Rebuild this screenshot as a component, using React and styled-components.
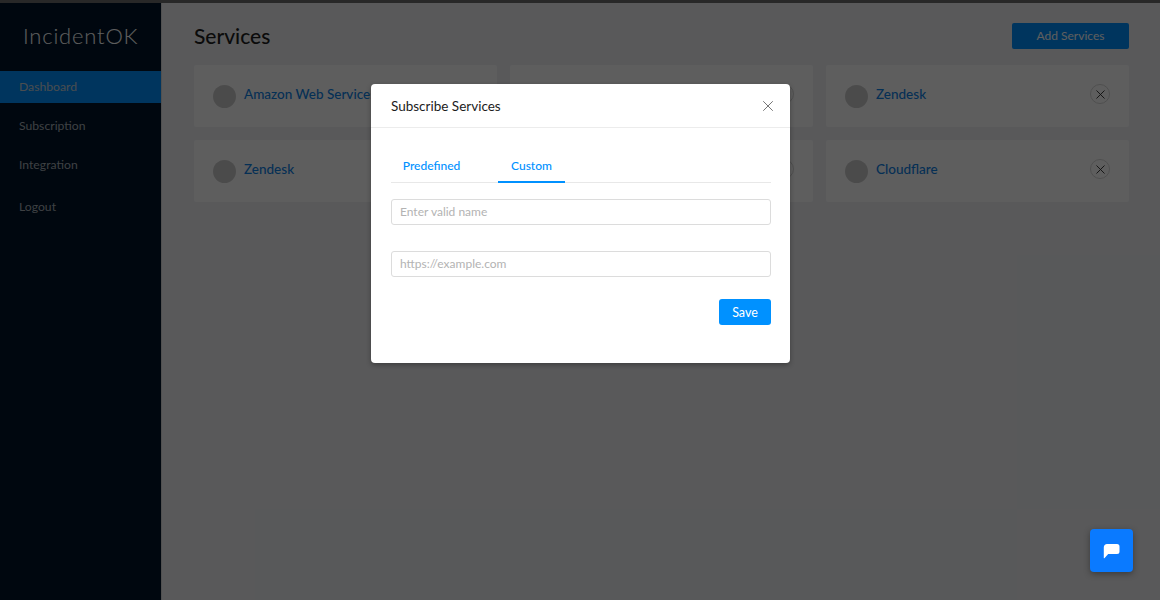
import React from "react";
import styled, { createGlobalStyle } from "styled-components";
import { X } from "lucide-react";

const GlobalStyle = createGlobalStyle`
  html, body { margin: 0; padding: 0; height: 100%; overflow: hidden; }
  body { font-family: "Lato", "Noto Sans", sans-serif; background: #f0f2f5; }
  * { box-sizing: border-box; }
`;

const Page = styled.div`
  position: relative;
  display: flex;
  width: 1160px;
  height: 600px;
  padding-top: 3px;
  background: #f0f2f5;
  overflow: hidden;
`;

const TopEdge = styled.div`
  position: absolute;
  top: 0;
  left: 0;
  right: 0;
  height: 3px;
  background: #6e6e6e;
`;

const Sidebar = styled.aside`
  width: 162px;
  flex: none;
  background: #001529;
  border-right: 1px solid #d9d9d9;
`;

const Logo = styled.div`
  height: 68px;
  padding: 20px 0 0 23px;
  color: #ffffff;
  font-family: "Lato", sans-serif;
  font-size: 22px;
  font-weight: 300;
  line-height: 26px;
  letter-spacing: 0.8px;
`;

const NavItem = styled.a`
  display: flex;
  align-items: center;
  height: 32px;
  margin-top: ${(p) => p.$gap}px;
  padding: 0 0 2px 19px;
  font-size: 12.2px;
  color: ${(p) => (p.$active ? "#c8d0d8" : "#a8afb7")};
  background: ${(p) => (p.$active ? "#0091ff" : "transparent")};
`;

const Main = styled.main`
  flex: 1;
  padding: 20px 31px 0 32px;
`;

const Header = styled.div`
  display: flex;
  align-items: center;
  justify-content: space-between;
  height: 26px;
`;

const Title = styled.h1`
  margin: 0;
  color: #1f1f1f;
  font-size: 21px;
  font-weight: 500;
  line-height: 26px;
`;

const AddButton = styled.button`
  width: 117px;
  height: 26px;
  padding: 0 0 2px;
  border: 0;
  border-radius: 2px;
  background: #0091ff;
  color: #ffffff;
  font: inherit;
  font-size: 12px;
`;

const CardGrid = styled.div`
  display: grid;
  grid-template-columns: repeat(3, 303px);
  grid-auto-rows: 62px;
  gap: 13px;
  margin-top: 16px;
`;

const Card = styled.div`
  display: flex;
  align-items: center;
  padding: 0 19px;
  background: #ffffff;
  border-radius: 2px;
`;

const Avatar = styled.span`
  width: 23px;
  height: 23px;
  flex: none;
  border-radius: 50%;
  background: #cccccc;
`;

const CardName = styled.a`
  flex: 1;
  margin: 0 0 5px 8px;
  color: #0f82e6;
  font-size: 13.5px;
  font-weight: 500;
  white-space: nowrap;
`;

const RemoveButton = styled.span`
  display: flex;
  align-items: center;
  justify-content: center;
  width: 20px;
  height: 20px;
  flex: none;
  margin-bottom: 4px;
  border: 1px solid #d6d6d6;
  border-radius: 50%;
  color: #222222;
`;

const ChatButton = styled.button`
  position: absolute;
  right: 27px;
  bottom: 28px;
  display: flex;
  align-items: center;
  justify-content: center;
  width: 43px;
  height: 43px;
  border: 0;
  border-radius: 4px;
  background: #0a7aff;
  box-shadow: 0 2px 6px rgba(0, 0, 0, 0.35);
  z-index: 2;
`;

const Mask = styled.div`
  position: absolute;
  inset: 0;
  background: rgba(0, 0, 0, 0.63);
  z-index: 1;
`;

const Modal = styled.section`
  position: absolute;
  top: 84px;
  left: 371px;
  width: 419px;
  height: 279px;
  border-radius: 4px;
  background: #ffffff;
  box-shadow: 0 2px 5px rgba(0, 0, 0, 0.3);
  z-index: 3;
`;

const ModalHeader = styled.header`
  display: flex;
  align-items: center;
  justify-content: space-between;
  height: 44px;
  padding: 0 13px 0 20px;
  border-bottom: 1px solid #ececec;
  color: #1c1c1c;
  font-size: 13.5px;
`;

const CloseButton = styled.span`
  display: flex;
  color: #666666;
`;

const ModalBody = styled.div`
  display: flex;
  flex-direction: column;
  padding: 24px 19px 0 20px;
`;

const Tabs = styled.div`
  display: flex;
  gap: 26px;
  height: 31px;
  border-bottom: 1px solid #e8e8e8;
`;

const Tab = styled.button`
  width: ${(p) => p.$width}px;
  height: 31px;
  padding: 0 0 2px;
  border: 0;
  border-bottom: 2px solid ${(p) => (p.$active ? "#0091ff" : "transparent")};
  background: none;
  color: #0091ff;
  font: inherit;
  font-size: 12px;
  font-weight: 500;
`;

const Input = styled.input`
  display: block;
  width: 100%;
  height: 26px;
  margin-top: ${(p) => p.$gap}px;
  padding: 0 8px 2px;
  border: 1px solid #dcdcdc;
  border-radius: 3px;
  font: inherit;
  font-size: 12px;
  &::placeholder { color: #b3b3b3; opacity: 1; }
`;

const SaveRow = styled.div`
  display: flex;
  justify-content: flex-end;
  margin-top: 22px;
`;

const SaveButton = styled.button`
  width: 52px;
  height: 26px;
  border: 0;
  border-radius: 3px;
  background: #0091ff;
  color: #ffffff;
  font: inherit;
  font-size: 12.5px;
`;

const nav = [
  { label: "Dashboard", gap: 0, active: true },
  { label: "Subscription", gap: 7 },
  { label: "Integration", gap: 7 },
  { label: "Logout", gap: 10 },
];

const services = ["Amazon Web Services", "", "Zendesk", "Zendesk", "", "Cloudflare"];

export default function App() {
  return (
    <Page>
      <GlobalStyle />
      <TopEdge />
      <Sidebar>
        <Logo>IncidentOK</Logo>
        {nav.map((item) => (
          <NavItem key={item.label} $gap={item.gap} $active={item.active}>
            {item.label}
          </NavItem>
        ))}
      </Sidebar>
      <Main>
        <Header>
          <Title>Services</Title>
          <AddButton>Add Services</AddButton>
        </Header>
        <CardGrid>
          {services.map((name, i) => (
            <Card key={i}>
              <Avatar />
              <CardName>{name}</CardName>
              <RemoveButton>
                <X size={15} strokeWidth={1.4} />
              </RemoveButton>
            </Card>
          ))}
        </CardGrid>
      </Main>
      <Mask />
      <Modal>
        <ModalHeader>
          Subscribe Services
          <CloseButton>
            <X size={18} strokeWidth={1.2} />
          </CloseButton>
        </ModalHeader>
        <ModalBody>
          <Tabs>
            <Tab $width={81}>Predefined</Tab>
            <Tab $width={67} $active>Custom</Tab>
          </Tabs>
          <Input $gap={16} placeholder="Enter valid name" />
          <Input $gap={26} placeholder="https://example.com" />
          <SaveRow>
            <SaveButton>Save</SaveButton>
          </SaveRow>
        </ModalBody>
      </Modal>
      <ChatButton aria-label="Chat">
        <svg width="17" height="16" viewBox="0 0 17 16" fill="#ffffff">
          <path d="M4 1h10a2.5 2.5 0 0 1 2.5 2.5v5A2.5 2.5 0 0 1 14 11H5.2L1.4 15.2c-.3.3-.6.1-.6-.3V4.2C.8 2.4 2.2 1 4 1z" />
        </svg>
      </ChatButton>
    </Page>
  );
}
